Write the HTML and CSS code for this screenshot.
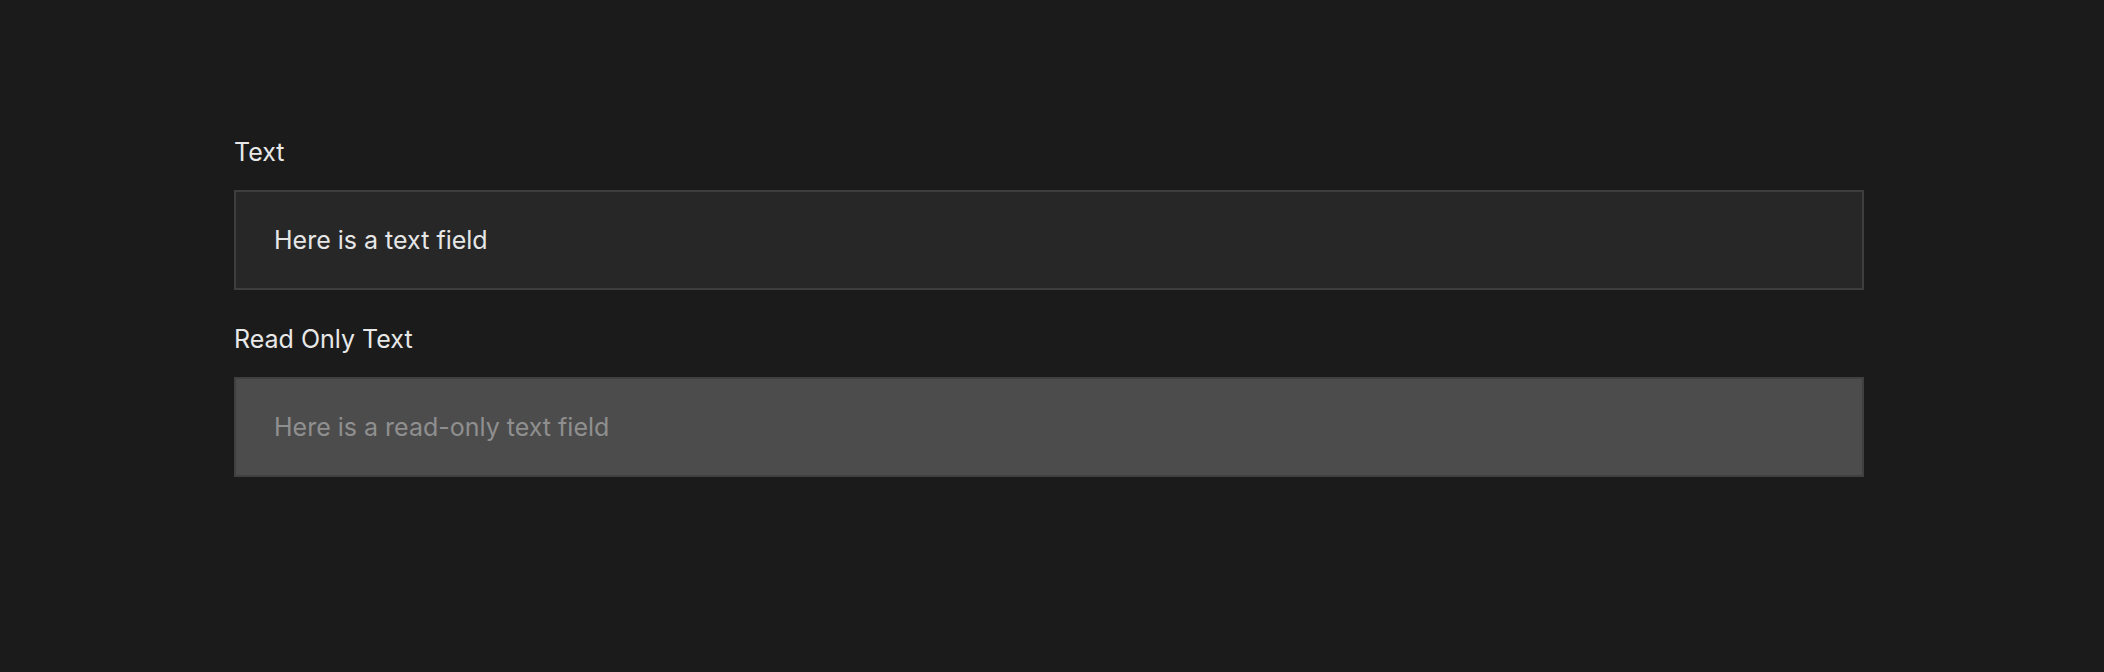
FILE: index.html
```html
<!DOCTYPE html>
<html lang="en">
<head>
<meta charset="utf-8">
<title>Text fields</title>
<link rel="stylesheet" href="styles.css">
</head>
<body>
<main class="form">
  <div class="field">
    <label class="label" for="t1">Text</label>
    <input class="input" id="t1" type="text" value="Here is a text field">
  </div>
  <div class="field">
    <label class="label" for="t2">Read Only Text</label>
    <input class="input input-readonly" id="t2" type="text" value="Here is a read-only text field" readonly>
  </div>
</main>
</body>
</html>
```
FILE: styles.css
```css
html, body {
  margin: 0;
  padding: 0;
  background: #1b1b1b;
  height: 100%;
}
body {
  font-family: Inter, "Noto Sans", "Liberation Sans", sans-serif;
  color: #e8e8e8;
}
.form {
  box-sizing: border-box;
  width: 1864px;
  padding: 134px 0 0 234px;
  display: flex;
  flex-direction: column;
  gap: 31px;
}
.field {
  display: flex;
  flex-direction: column;
  gap: 20px;
}
.label {
  font-size: 25px;
  line-height: 36px;
  color: #e8e8e8;
}
.input {
  box-sizing: border-box;
  width: 1630px;
  height: 100px;
  margin: 0;
  padding: 0 38px;
  border: 2px solid #3e3e3e;
  background: #272727;
  color: #e6e6e6;
  font-family: inherit;
  font-size: 25px;
  outline: none;
}
.input-readonly {
  background: #4c4c4c;
  border-color: #404040;
  color: #8f8f8f;
}
```
